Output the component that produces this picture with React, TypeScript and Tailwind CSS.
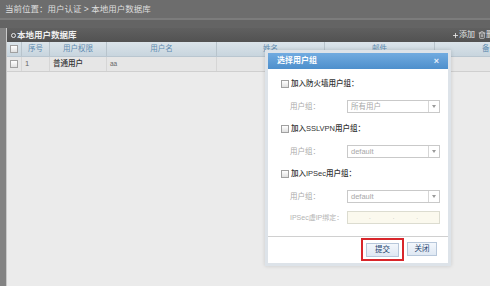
import { Plus, Trash2 } from 'lucide-react';

const font = { fontFamily: '"Liberation Sans", "Noto Sans CJK SC", sans-serif' };

const columns = [
  { label: '序号', w: 'w-[28px]' },
  { label: '用户权限', w: 'w-[57px]' },
  { label: '用户名', w: 'w-[110px]' },
  { label: '姓名', w: 'w-[108px]' },
  { label: '邮件', w: 'w-[110px]' },
  { label: '备注', w: 'w-[110px]' },
];

const Checkbox = () => (
  <span className="w-[8px] h-[8px] border border-[#a0a0a0] bg-gradient-to-b from-white to-[#e0e0e0] shrink-0" />
);

const Select = ({ value }: { value: string }) => (
  <div className="w-[93px] h-[13px] border border-[#c9c9c9] bg-white flex items-center">
    <span className="flex-1 pl-[3px] text-[7.5px] text-[#a8a8a8] leading-none">{value}</span>
    <span className="w-[11px] h-full border-l border-[#d6d6d6] flex items-center justify-center">
      <span className="w-0 h-0 border-l-[2.5px] border-r-[2.5px] border-t-[3px] border-l-transparent border-r-transparent border-t-[#9a9a9a]" />
    </span>
  </div>
);

const Group = ({ title, value, extra }: { title: string; value: string; extra?: boolean }) => (
  <div className="flex flex-col">
    <div className="flex items-center gap-[2px] h-[14px] pl-[13px]">
      <Checkbox />
      <span className="text-[7.5px] text-[#333] font-medium leading-none">{title}</span>
    </div>
    <div className="flex items-center h-[13px] mt-[9px] pl-[22px]">
      <span className="w-[57px] text-[7.5px] text-[#aaa] leading-none">用户组：</span>
      <Select value={value} />
    </div>
    {extra && (
      <div className="flex items-center h-[13px] mt-[8px] pl-[22px]">
        <span className="w-[57px] text-[7px] text-[#b4b4b4] leading-none whitespace-nowrap">IPSec虚IP绑定：</span>
        <div className="w-[93px] h-[13px] border border-[#dcdcd0] bg-[#fbf9ee] flex items-center justify-around px-[10px] text-[6px] text-[#aaa]">
          <span>.</span>
          <span>.</span>
          <span>.</span>
        </div>
      </div>
    )}
  </div>
);

export default function App() {
  return (
    <div className="relative w-[490px] h-[286px] overflow-hidden bg-[#6a6a6a] flex flex-col" style={font}>
      {/* breadcrumb */}
      <div className="h-[18px] shrink-0 bg-[#6d6d6d] flex items-center px-[5px] text-[8.5px] text-[#dedede]">
        当前位置：用户认证 &gt; 本地用户数据库
      </div>
      <div className="h-[2px] shrink-0 bg-[#7c7c7c]" />

      <div className="flex-1 flex pt-[8px] bg-[#646464]">
        <div className="w-[6px] shrink-0 bg-[#838383]" />
        <div className="flex-1 min-w-0 overflow-hidden flex flex-col bg-[#ebebeb] border-l border-[#c8c8c8]">
          {/* panel header */}
          <div className="h-[14px] shrink-0 bg-gradient-to-b from-[#606060] to-[#525252] flex items-center justify-between pl-[4px] text-[8.5px] text-[#efefef]">
            <div className="flex items-center gap-[1px] font-semibold">
              <span className="w-[5px] h-[5px] rounded-full border border-[#e8e8e8]" />
              本地用户数据库
            </div>
            <div className="w-[38px] shrink-0 overflow-hidden flex items-center gap-[3px] text-[8px] text-[#e6e6e6] whitespace-nowrap">
              <span className="flex items-center shrink-0"><Plus size={7} strokeWidth={3} />添加</span>
              <span className="flex items-center shrink-0"><Trash2 size={8} />删除</span>
            </div>
          </div>

          {/* table header */}
          <div className="h-[15px] shrink-0 flex bg-gradient-to-b from-[#dbe4ea] to-[#c8d5de] border-b border-[#b9c6d0]">
            <div className="w-[15px] shrink-0 flex items-center justify-center border-r border-[#b8c4cc]">
              <Checkbox />
            </div>
            {columns.map((c) => (
              <div
                key={c.label}
                className={`${c.w} shrink-0 flex items-center justify-center border-r border-[#b8c4cc] text-[7.5px] text-[#5e8bb0]`}
              >
                {c.label}
              </div>
            ))}
          </div>

          {/* row */}
          <div className="h-[15px] shrink-0 flex bg-[#e6e6e6] border-b border-[#cfcfcf] text-[7.5px] text-[#333]">
            <div className="w-[15px] shrink-0 flex items-center justify-center border-r border-[#d6d6d6]">
              <Checkbox />
            </div>
            <div className="w-[28px] shrink-0 flex items-center pl-[3px] border-r border-[#d6d6d6] text-[#666]">1</div>
            <div className="w-[57px] shrink-0 flex items-center pl-[3px] border-r border-[#d6d6d6] font-medium">普通用户</div>
            <div className="w-[110px] shrink-0 flex items-center pl-[3px] border-r border-[#d6d6d6] text-[#666] text-[6.5px]">aa</div>
            <div className="w-[108px] shrink-0 border-r border-[#d6d6d6]" />
            <div className="w-[110px] shrink-0 border-r border-[#d6d6d6]" />
            <div className="w-[110px] shrink-0" />
          </div>
          <div className="flex-1" />
        </div>
      </div>

      {/* dialog */}
      <div className="absolute left-[265px] top-[50px] w-[186px] h-[216px] p-[3px] bg-[#dde3e9] shadow-[0_0_4px_rgba(0,0,0,0.15)]">
        <div className="w-full h-full bg-white flex flex-col">
          <div className="h-[16px] shrink-0 bg-gradient-to-b from-[#71abe0] to-[#4d8fcc] flex items-center justify-between px-[9px] text-white">
            <span className="text-[8px] font-semibold leading-none">选择用户组</span>
            <span className="text-[9px] font-bold leading-none text-[#e4eefa]">×</span>
          </div>

          <div className="flex flex-col pt-[8px]">
            <Group title="加入防火墙用户组：" value="所有用户" />
            <div className="mt-[9px]">
              <Group title="加入SSLVPN用户组：" value="default" />
            </div>
            <div className="mt-[9px]">
              <Group title="加入IPSec用户组：" value="default" extra />
            </div>
          </div>

          <div className="mt-[12px] border-t border-[#d0d0d0]" />

          <div className="flex justify-end items-start gap-[3px] pr-[11px] pt-[1px]">
            <div className="border-2 border-[#d8262b] p-[2.5px] px-[3px]">
              <button className="w-[33px] h-[14px] border border-[#b7c7da] bg-gradient-to-b from-[#f3f7fc] to-[#dfe8f3] text-[7.5px] text-[#23446e] flex items-center justify-center">
                提交
              </button>
            </div>
            <button className="mt-[4px] w-[30px] h-[14px] border border-[#b7c7da] bg-gradient-to-b from-[#f3f7fc] to-[#dfe8f3] text-[7.5px] text-[#23446e] flex items-center justify-center">
              关闭
            </button>
          </div>
        </div>
      </div>
    </div>
  );
}
